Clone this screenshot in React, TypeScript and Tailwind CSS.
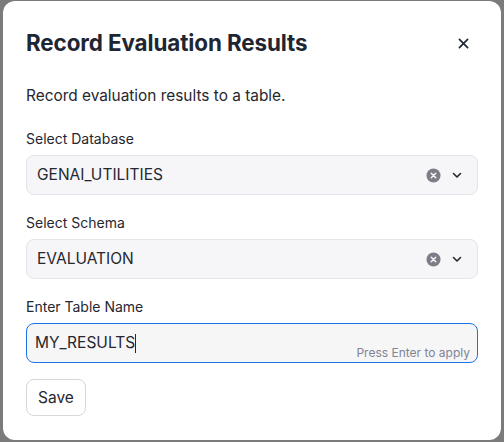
import React from "react";

function ClearIcon() {
  return (
    <svg width="15" height="15" viewBox="0 0 16 16" aria-hidden>
      <circle cx="8" cy="8" r="7.5" fill="#7c7d87" />
      <path d="M5.6 5.6 L10.4 10.4 M10.4 5.6 L5.6 10.4" stroke="#f5f5f7" strokeWidth="1.6" strokeLinecap="round" />
    </svg>
  );
}

function Chevron() {
  return (
    <svg width="12" height="12" viewBox="0 0 12 12" aria-hidden>
      <path d="M2.5 4.5 L6 8 L9.5 4.5" fill="none" stroke="#262730" strokeWidth="1.6" strokeLinecap="round" strokeLinejoin="round" />
    </svg>
  );
}

function SelectField({ label, value }: { label: string; value: string }) {
  return (
    <div className="flex flex-col">
      <label className="text-sm text-[#262730] leading-5 mb-[6px]">{label}</label>
      <div className="h-10 rounded-lg border border-[#e4e4ea] bg-[#f6f6f8] flex items-center pl-[10px] pr-[14px]">
        <span className="flex-1 text-[15.5px] text-[#262730]">{value}</span>
        <div className="flex items-center gap-[10px]">
          <ClearIcon />
          <Chevron />
        </div>
      </div>
    </div>
  );
}

export default function App() {
  return (
    <div className="w-[504px] h-[442px] bg-[#7b7b7b] overflow-hidden pt-px px-[3px] font-['Inter',sans-serif]">
      <div className="bg-white rounded-xl h-[439px] px-[23px] pt-[24px]">
        <div className="flex items-center justify-between">
          <h2 className="text-[22.4px] font-bold text-[#1f2633] leading-9 tracking-[-0.1px]">Record Evaluation Results</h2>
          <button className="mr-[9px] text-[#1f2633]">
            <svg width="11" height="11" viewBox="0 0 12 12" aria-hidden>
              <path d="M1.5 1.5 L10.5 10.5 M10.5 1.5 L1.5 10.5" stroke="currentColor" strokeWidth="1.8" strokeLinecap="round" />
            </svg>
          </button>
        </div>
        <p className="mt-[23px] text-[15.4px] text-[#262730] leading-6">Record evaluation results to a table.</p>
        <div className="mt-[21px] flex flex-col gap-[18px]">
          <SelectField label="Select Database" value="GENAI_UTILITIES" />
          <SelectField label="Select Schema" value="EVALUATION" />
        </div>
        <div className="mt-[18px] flex flex-col">
          <label className="text-sm text-[#262730] leading-5 mb-[6px]">Enter Table Name</label>
          <div className="relative h-10 rounded-lg border border-[#1a73e8] bg-[#f6f6f6] flex items-center pl-[8px]">
            <span className="text-[15.5px] text-[#262730]">MY_RESULTS</span>
            <span className="w-px h-[19px] bg-[#262730]" />
            <span className="absolute right-[7px] bottom-[1px] text-xs text-[#808495]">Press Enter to apply</span>
          </div>
        </div>
        <button className="mt-[16px] h-[37px] px-[11px] rounded-lg border border-[#d6d6db] text-[15.5px] text-[#262730] bg-white">Save</button>
      </div>
    </div>
  );
}
